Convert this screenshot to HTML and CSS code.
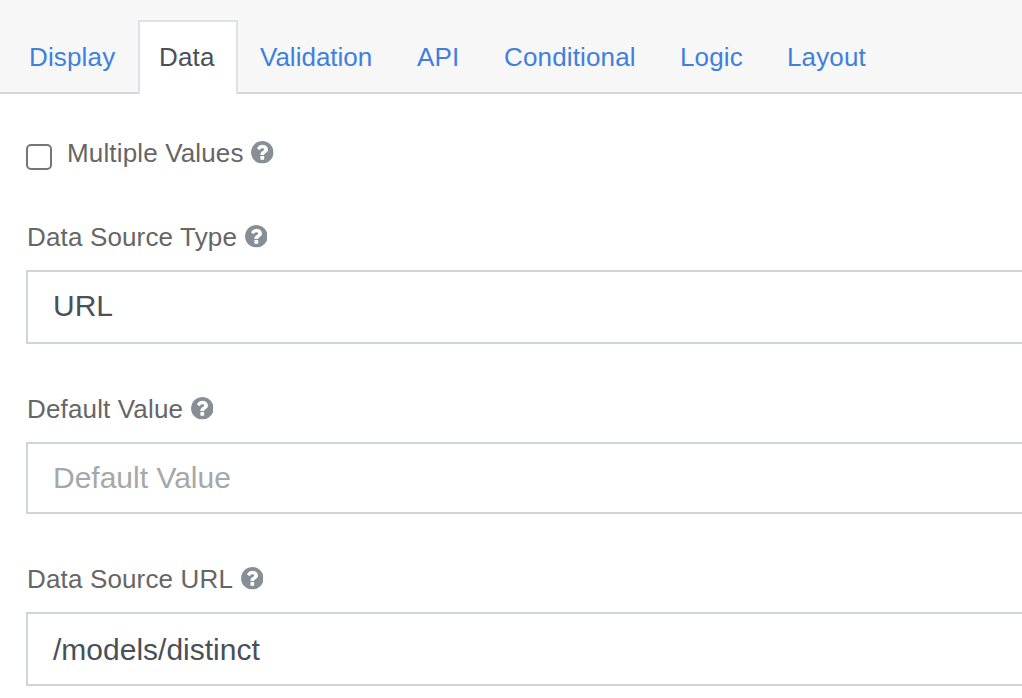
FILE: index.html
```html
<!DOCTYPE html>
<html lang="en">
<head>
<meta charset="utf-8">
<title>Component settings</title>
<link rel="stylesheet" href="styles.css">
</head>
<body>
<svg class="symbols" aria-hidden="true">
  <symbol id="help" viewBox="0 0 1536 1536"><path d="M896 1248v-192q0-14-9-23t-23-9h-192q-14 0-23 9t-9 23v192q0 14 9 23t23 9h192q14 0 23-9t9-23zm256-672q0-88-55.5-163t-138.5-116-170-41q-243 0-371 213-15 24 8 42l132 100q7 6 19 6 16 0 25-12 53-68 86-92 34-24 86-24 48 0 85.500 26t37.500 59q0 38-20 61t-68 45q-63 28-115.500 86.500t-52.500 125.500v36q0 14 9 23t23 9h192q14 0 23-9t9-23q0-19 21.500-49.500t54.500-49.500q32-18 49-28.500t46-35 44.500-48 28-60.500 12.500-81zm384 192q0 209-103 385.500t-279.500 279.500-385.500 103-385.500-103-279.500-279.500-103-385.500 103-385.500 279.500-279.500 385.500-103 385.500 103 279.500 279.500 103 385.500z"/></symbol>
</svg>
<nav class="tabs">
  <a class="tab display">Display</a>
  <a class="tab data active">Data</a>
  <a class="tab validation">Validation</a>
  <a class="tab api">API</a>
  <a class="tab conditional">Conditional</a>
  <a class="tab logic">Logic</a>
  <a class="tab layout">Layout</a>
</nav>
<main class="form">
  <label class="check"><input class="box" type="checkbox"><span class="label">Multiple Values</span><svg class="help"><use href="#help"/></svg></label>
  <section class="field source-type">
    <div class="caption"><span class="label">Data Source Type</span><svg class="help"><use href="#help"/></svg></div>
    <div class="control select">URL</div>
  </section>
  <section class="field default-value">
    <div class="caption"><span class="label">Default Value</span><svg class="help"><use href="#help"/></svg></div>
    <div class="control short placeholder">Default Value</div>
  </section>
  <section class="field source-url">
    <div class="caption"><span class="label">Data Source URL</span><svg class="help"><use href="#help"/></svg></div>
    <div class="control">/models/distinct</div>
  </section>
</main>
</body>
</html>
```
FILE: styles.css
```css
* { box-sizing: border-box; }
body {
  margin: 0;
  height: 698px;
  overflow: hidden;
  background: #fff;
  color: #666;
  font: 26px/40px "Liberation Sans", Arial, sans-serif;
  letter-spacing: 0.15px;
}
.symbols { display: none; }
.tabs {
  display: flex;
  height: 94px;
  padding: 20px 0 0 6px;
  background: #f7f7f7;
  border-bottom: 2px solid #d5d6d7;
}
.tab {
  flex: none;
  height: 74px;
  padding: 15px 0 0 20px;
  border: 2px solid transparent;
  border-bottom: 0;
  color: #3f80df;
  white-space: nowrap;
}
.display { width: 132px; padding-left: 21px; }
.data { width: 100px; padding-left: 19px; }
.validation { width: 157px; letter-spacing: 0; }
.api { width: 87px; }
.conditional { width: 176px; }
.logic { width: 107px; }
.layout { width: 124px; }
.active {
  background: #fff;
  border-color: #dee2e6;
  color: #495057;
}
.form { padding: 39px 0 0 26px; }
.check, .caption {
  display: flex;
  align-items: center;
  height: 40px;
}
.box {
  appearance: none;
  flex: none;
  width: 26px;
  height: 26px;
  margin: 8px 15px 0 0;
  border: 2px solid #767676;
  border-radius: 5px;
  background: #fff;
}
.label { white-space: nowrap; }
.help {
  flex: none;
  width: 22.6px;
  height: 22.6px;
  margin: 0 0 1px 7.5px;
  fill: #868e96;
}
.source-type { margin-top: 44px; }
.default-value { margin-top: 45px; }
.source-url { margin-top: 45px; }
.caption { padding-left: 1px; }
.control {
  height: 74px;
  margin-top: 13px;
  padding: 16px 25px 0;
  border: 2px solid #ced4da;
  border-right: 0;
  color: #495057;
  font-size: 30px;
  letter-spacing: 0;
}
.select { padding-top: 14px; }
.short { height: 72px; padding-top: 14px; }
.placeholder { color: #a5a8aa; }
```
